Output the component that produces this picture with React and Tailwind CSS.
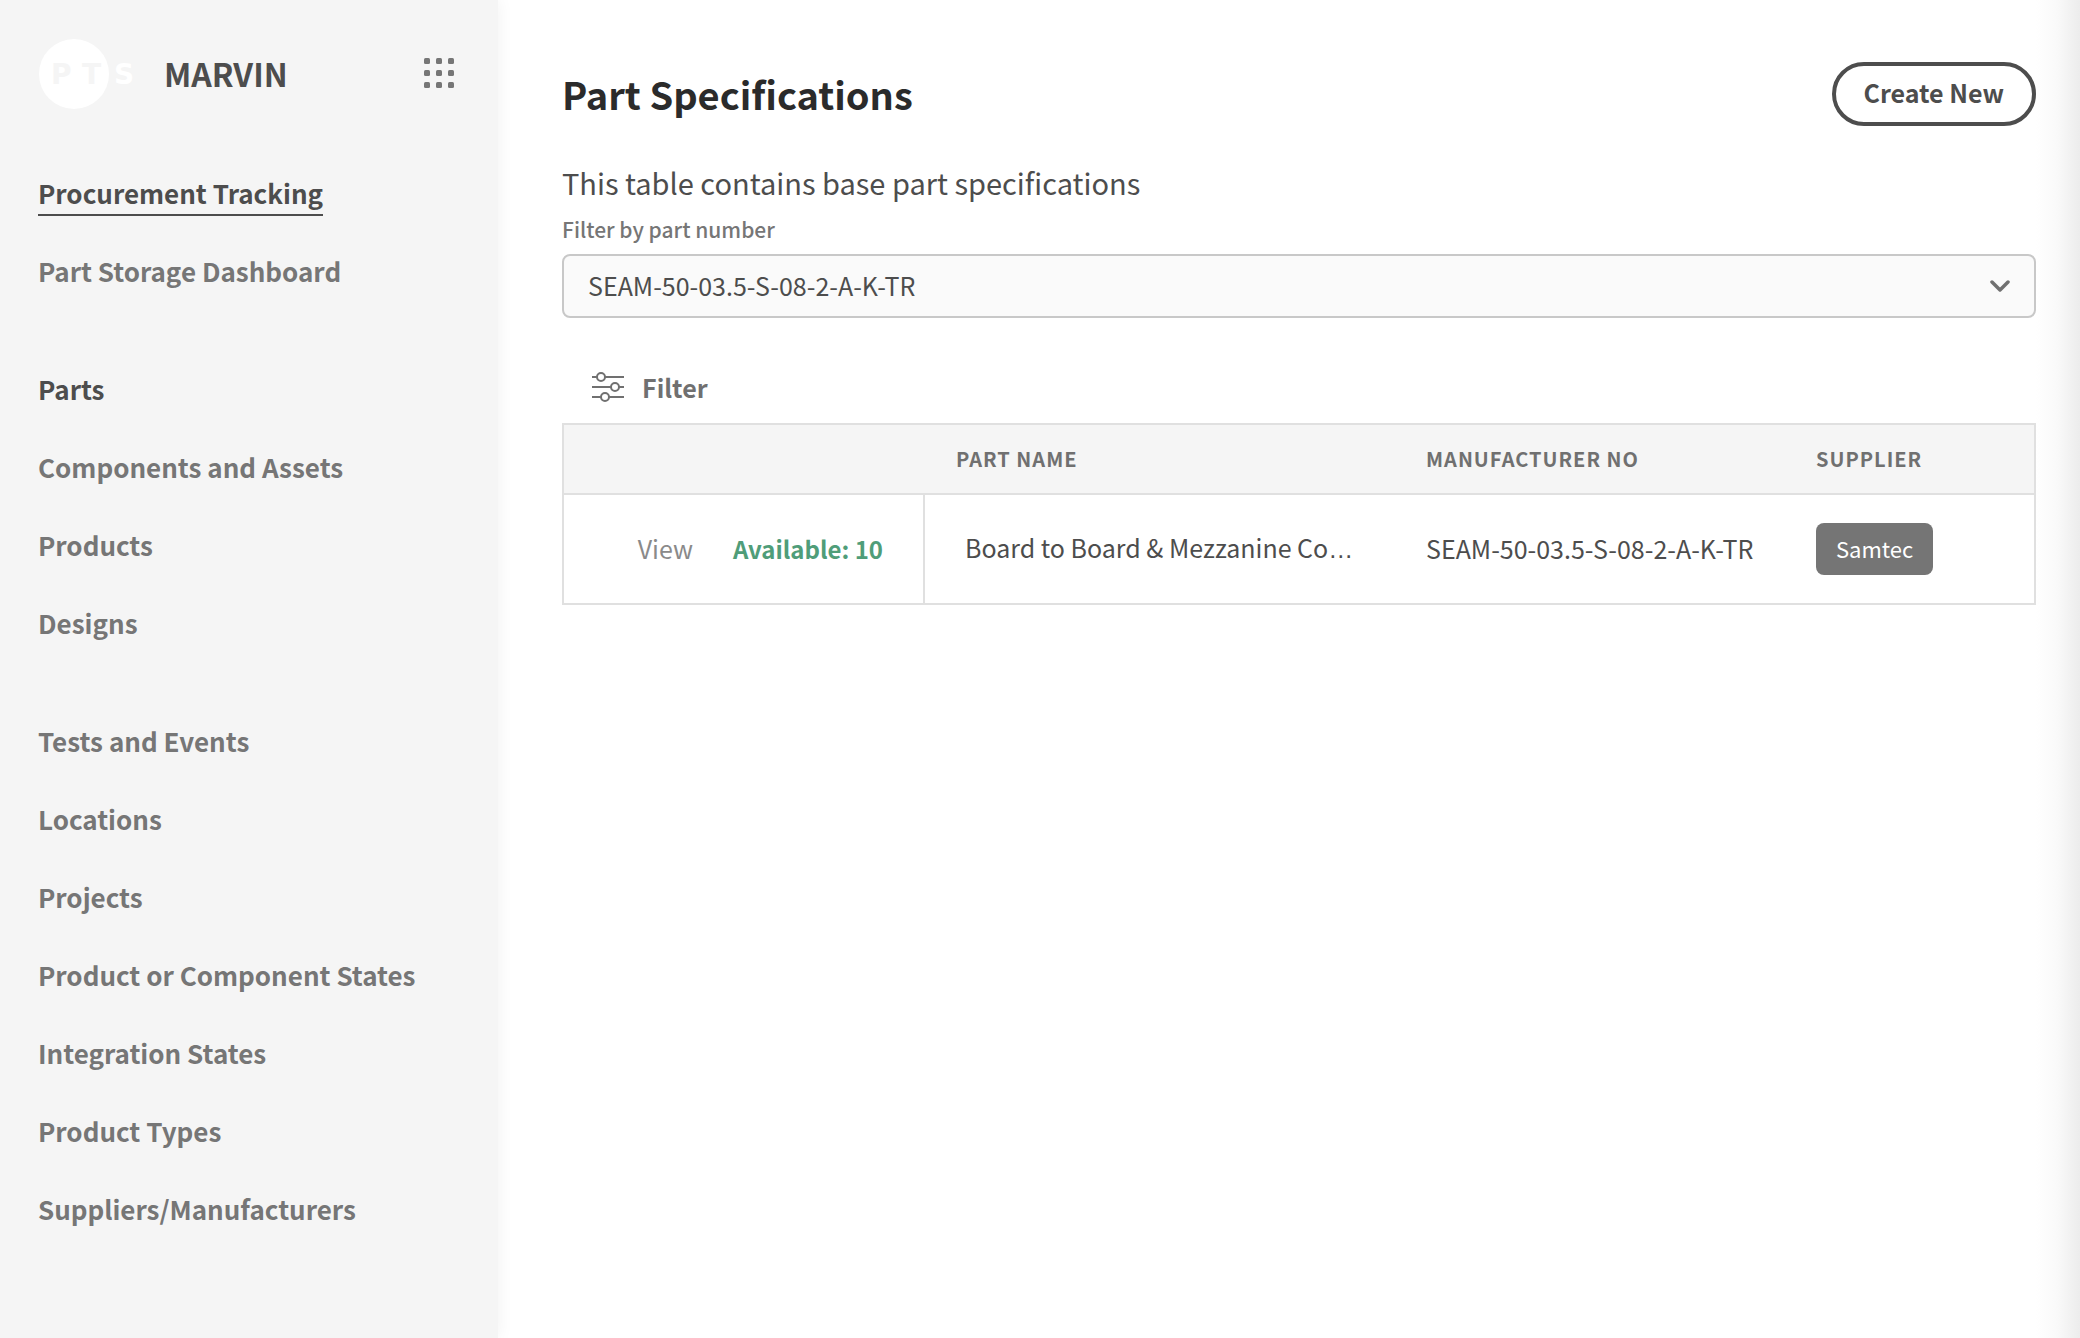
const navGroups = [
  [
    { label: 'Procurement Tracking', state: 'current' },
    { label: 'Part Storage Dashboard' },
  ],
  [
    { label: 'Parts', state: 'open' },
    { label: 'Components and Assets' },
    { label: 'Products' },
    { label: 'Designs' },
  ],
  [
    { label: 'Tests and Events' },
    { label: 'Locations' },
    { label: 'Projects' },
    { label: 'Product or Component States' },
    { label: 'Integration States' },
    { label: 'Product Types' },
    { label: 'Suppliers/Manufacturers' },
  ],
];

const linkStyles = {
  current: 'border-[#4d4d4d] text-[#4d4d4d]',
  open: 'border-transparent text-[#4d4d4d]',
  normal: 'border-transparent text-[#767676]',
};

function Logo() {
  return (
    <svg width="102" height="70" viewBox="0 0 102 70" role="img" aria-label="PTS" className="shrink-0 overflow-visible">
      <circle cx="36" cy="36" r="35" fill="#ffffff" />
      <g fontFamily="'DejaVu Sans', sans-serif" fontWeight="700" fontSize="28">
        <text x="13" y="46" fill="#f5f5f5">P</text>
        <text x="44" y="46" fill="#f5f5f5">T</text>
        <text x="76" y="46" fill="#ffffff">S</text>
      </g>
    </svg>
  );
}

function GridIcon() {
  return (
    <svg width="30" height="30" viewBox="0 0 30 30" fill="#767676" aria-hidden="true">
      {[0, 12, 24].map((y) =>
        [0, 12, 24].map((x) => <rect key={`${x}-${y}`} x={x} y={y} width="6" height="6" rx="1.5" />)
      )}
    </svg>
  );
}

function SlidersIcon() {
  return (
    <svg width="32" height="30" viewBox="0 0 32 30" fill="none" stroke="#707070" strokeWidth="2" aria-hidden="true">
      <path d="M0 5h5M13 5h19M0 15h19M27 15h5M0 25h9M17 25h15" />
      <circle cx="9" cy="5" r="4" />
      <circle cx="23" cy="15" r="4" />
      <circle cx="13" cy="25" r="4" />
    </svg>
  );
}

function Sidebar() {
  return (
    <aside className="w-[498px] shrink-0 bg-[#f5f5f5] px-[38px] pt-[38px] shadow-[0_0_16px_rgba(0,0,0,0.06)]">
      <div className="flex items-center pr-[6px]">
        <Logo />
        <span className="ml-6 text-[32px] leading-[48px] font-bold text-[#4d4d4d]">MARVIN</span>
        <button type="button" aria-label="Apps" className="ml-auto">
          <GridIcon />
        </button>
      </div>
      <nav className="mt-[66px] flex flex-col gap-19">
        {navGroups.map((group, i) => (
          <ul key={i} className="flex flex-col gap-9">
            {group.map(({ label, state }) => (
              <li key={label} className="flex">
                <a
                  href="#"
                  className={`border-b-2 pb-0.5 text-[26px] leading-[38px] font-bold whitespace-nowrap ${linkStyles[state || 'normal']}`}
                >
                  {label}
                </a>
              </li>
            ))}
          </ul>
        ))}
      </nav>
    </aside>
  );
}

function PartsTable() {
  return (
    <table className="mt-4 w-full table-fixed border-collapse border-2 border-[#e0e0e0] text-left">
      <colgroup>
        <col className="w-[361px]" />
        <col className="w-[470px]" />
        <col className="w-[390px]" />
        <col />
      </colgroup>
      <thead>
        <tr className="h-[70px] border-b-2 border-[#e0e0e0] bg-[#f5f5f5] text-[20px] tracking-wider text-[#707070] uppercase">
          <td />
          <th className="px-8 font-bold">Part Name</th>
          <th className="px-8 font-bold">Manufacturer No</th>
          <th className="px-8 font-bold">Supplier</th>
        </tr>
      </thead>
      <tbody>
        <tr className="h-[110px] text-[25px] text-[#4d4d4d]">
          <td className="border-r-2 border-[#e0e0e0] pr-10">
            <div className="flex items-baseline justify-end gap-10">
              <a href="#" className="text-[#8a8a8a]">View</a>
              <span className="text-[24px] font-bold text-[#4f9d79]">Available: 10</span>
            </div>
          </td>
          <td className="pl-10 whitespace-nowrap">
            Board to Board &amp; Mezzanine Co<span className="font-['Liberation_Sans',sans-serif]">…</span>
          </td>
          <td className="px-8 whitespace-nowrap">SEAM-50-03.5-S-08-2-A-K-TR</td>
          <td className="px-8">
            <span className="inline-block rounded-lg bg-[#757575] px-5 pb-0.5 text-[22px] leading-[50px] text-white">Samtec</span>
          </td>
        </tr>
      </tbody>
    </table>
  );
}

export default function App() {
  return (
    <div className="flex min-h-screen bg-white font-['Noto_Sans_CJK_SC',sans-serif]">
      <Sidebar />
      <div className="flex min-w-0 flex-1">
        <main className="min-w-0 flex-1 pt-[62px] pl-16">
          <div className="flex items-center justify-between">
            <h1 className="text-[38px] leading-[64px] font-bold text-[#2b2b2b]">Part Specifications</h1>
            <button type="button" className="h-16 rounded-full border-4 border-[#4d4d4d] px-7 pb-1 text-[25px] leading-[48px] font-bold text-[#4d4d4d]">
              Create New
            </button>
          </div>
          <p className="mt-9 text-[29px] leading-10 text-[#4d4d4d]">This table contains base part specifications</p>
          <label htmlFor="part-number" className="mt-3 block text-[21px] leading-[30px] font-medium text-[#767676]">
            Filter by part number
          </label>
          <div className="relative mt-2.5">
            <select
              id="part-number"
              defaultValue="seam"
              className="h-16 w-full appearance-none rounded-lg border-2 border-[#c8c8c8] bg-[#fafafa] px-6 text-[25px] text-[#4d4d4d]"
            >
              <option value="seam">SEAM-50-03.5-S-08-2-A-K-TR</option>
            </select>
            <svg width="20" height="12" viewBox="0 0 20 12" fill="none" stroke="#707070" strokeWidth="3.5" strokeLinecap="round" strokeLinejoin="round" aria-hidden="true" className="pointer-events-none absolute top-[26px] right-[26px]">
              <path d="M2 2l8 8 8-8" />
            </svg>
          </div>
          <button type="button" className="mt-[49px] ml-[30px] flex items-center gap-[18px] text-[25px] leading-10 font-bold text-[#707070]">
            <SlidersIcon />
            Filter
          </button>
          <PartsTable />
        </main>
        <div className="w-11 shrink-0 bg-linear-to-r from-white via-[#f9f9f9] to-[#ececec]" />
      </div>
    </div>
  );
}
